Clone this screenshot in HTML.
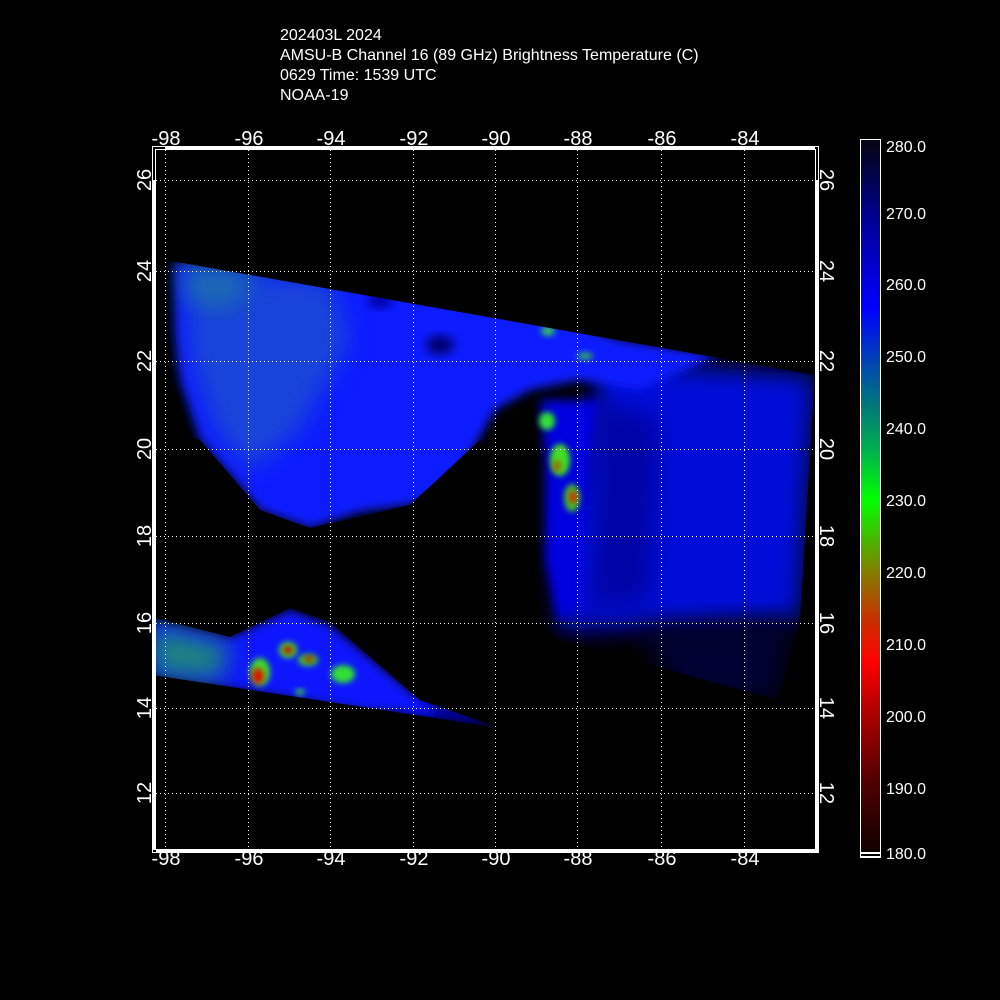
<!DOCTYPE html>
<html><head><meta charset="utf-8"><style>
html,body{margin:0;padding:0;background:#000;width:1000px;height:1000px;overflow:hidden}
svg{display:block}
text{font-family:"Liberation Sans",sans-serif;fill:#fff}
</style></head><body>
<svg width="1000" height="1000" viewBox="0 0 1000 1000" xmlns="http://www.w3.org/2000/svg">
<defs>
<linearGradient id="cb" x1="0" y1="146" x2="0" y2="853" gradientUnits="userSpaceOnUse">
<stop offset="0" stop-color="#05051a"/><stop offset="0.1" stop-color="#000090"/>
<stop offset="0.23" stop-color="#0000ff"/><stop offset="0.3" stop-color="#0040b8"/>
<stop offset="0.37" stop-color="#007a78"/><stop offset="0.43" stop-color="#00b050"/>
<stop offset="0.5" stop-color="#00ff00"/><stop offset="0.6" stop-color="#808000"/>
<stop offset="0.67" stop-color="#c83000"/><stop offset="0.73" stop-color="#ff0000"/>
<stop offset="0.8" stop-color="#b00000"/><stop offset="0.9" stop-color="#500000"/>
<stop offset="1" stop-color="#100000"/></linearGradient>
<filter id="b6" x="-20%" y="-20%" width="140%" height="140%"><feGaussianBlur stdDeviation="5"/></filter>
<filter id="b3" x="-50%" y="-50%" width="200%" height="200%"><feGaussianBlur stdDeviation="3"/></filter>
<filter id="b10" x="-20%" y="-20%" width="140%" height="140%"><feGaussianBlur stdDeviation="12"/></filter>
<clipPath id="sw1"><polygon points="177,262 815,375 800,620 778,700 560,640 540,625 520,540 480,440 410,505 310,528 260,510 200,440 160,430 160,262"/></clipPath>
<clipPath id="sw2"><polygon points="152,617 230,637 290,608 330,622 420,700 500,728 152,675"/></clipPath>
</defs>
<g clip-path="url(#sw1)">
<rect x="150" y="250" width="670" height="470" fill="#000"/>
<polygon points="600,360 815,375 800,620 560,630 560,560 590,440" fill="#0010d8" filter="url(#b10)"/>
<polygon points="600,400 660,420 650,600 590,610" fill="#000090" opacity="0.7" filter="url(#b10)"/>
<polygon points="640,630 790,620 778,700 680,700" fill="#000030" filter="url(#b10)"/>
<polygon points="175,262 500,300 620,340 720,355 640,390 580,380 530,390 495,410 478,440 460,470 440,490 410,505 360,512 310,528 260,510 235,480 200,440 180,380 175,330" fill="#0a1cff" filter="url(#b6)"/>
<polygon points="185,270 330,280 350,340 300,430 250,470 215,430 190,360" fill="#1a50d0" opacity="0.8" filter="url(#b10)"/>
<polygon points="180,262 260,268 230,310 185,300" fill="#1a7aa0" opacity="0.7" filter="url(#b10)"/>
<ellipse cx="440" cy="345" rx="14" ry="10" fill="#000070" filter="url(#b6)"/>
<ellipse cx="380" cy="300" rx="12" ry="8" fill="#0000a0" filter="url(#b6)"/>
<ellipse cx="160" cy="480" rx="20" ry="30" fill="#000090" filter="url(#b10)"/>
<ellipse cx="510" cy="555" rx="8" ry="10" fill="#0000a0" filter="url(#b3)"/>
<polygon points="540,400 600,400 590,470 580,600 560,625 545,560 545,460" fill="#0000e0" filter="url(#b6)"/>
<ellipse cx="547" cy="421" rx="8" ry="9" fill="#30e030" filter="url(#b3)"/>
<ellipse cx="560" cy="460" rx="10" ry="16" fill="#40e020" filter="url(#b3)"/>
<ellipse cx="557" cy="466" rx="4" ry="6" fill="#a06000" filter="url(#b3)"/>
<ellipse cx="572" cy="498" rx="8" ry="14" fill="#40c020" filter="url(#b3)"/>
<ellipse cx="573" cy="497" rx="4" ry="6" fill="#e02000" filter="url(#b3)"/>
<ellipse cx="548" cy="331" rx="7" ry="5" fill="#30c060" filter="url(#b3)"/>
<ellipse cx="585" cy="356" rx="8" ry="4" fill="#30a070" filter="url(#b3)"/>
</g>
<g clip-path="url(#sw2)">
<rect x="150" y="600" width="360" height="130" fill="#000"/>
<polygon points="420,690 500,728 400,715" fill="#0000a0" filter="url(#b6)"/>
<polygon points="152,620 230,637 290,610 330,625 420,700 440,715 360,710 152,675" fill="#0a18ff" filter="url(#b6)"/>
<polygon points="152,625 230,645 220,680 152,675" fill="#20a060" opacity="0.8" filter="url(#b10)"/>
<ellipse cx="260" cy="672" rx="10" ry="14" fill="#40e020" filter="url(#b3)"/>
<ellipse cx="258" cy="676" rx="6" ry="8" fill="#e01000" filter="url(#b3)"/>
<ellipse cx="288" cy="650" rx="9" ry="8" fill="#40e020" filter="url(#b3)"/>
<ellipse cx="288" cy="650" rx="5" ry="4" fill="#d00000" filter="url(#b3)"/>
<ellipse cx="308" cy="660" rx="10" ry="6" fill="#40d020" filter="url(#b3)"/>
<ellipse cx="309" cy="659" rx="5" ry="3" fill="#c01000" filter="url(#b3)"/>
<ellipse cx="343" cy="674" rx="12" ry="9" fill="#30e030" filter="url(#b3)"/>
<ellipse cx="300" cy="692" rx="5" ry="3" fill="#30d040" filter="url(#b3)"/>
</g>
<g stroke="#fff" stroke-width="1" stroke-dasharray="1,3">
<line x1="165.5" y1="150" x2="165.5" y2="850"/><line x1="248.5" y1="150" x2="248.5" y2="850"/>
<line x1="330.5" y1="150" x2="330.5" y2="850"/><line x1="413.5" y1="150" x2="413.5" y2="850"/>
<line x1="495.5" y1="150" x2="495.5" y2="850"/><line x1="577.5" y1="150" x2="577.5" y2="850"/>
<line x1="661.5" y1="150" x2="661.5" y2="850"/><line x1="744.5" y1="150" x2="744.5" y2="850"/>
<line x1="156" y1="180.5" x2="815" y2="180.5"/><line x1="156" y1="271.5" x2="815" y2="271.5"/>
<line x1="156" y1="361.5" x2="815" y2="361.5"/><line x1="156" y1="449.5" x2="815" y2="449.5"/>
<line x1="156" y1="536.5" x2="815" y2="536.5"/><line x1="156" y1="623.5" x2="815" y2="623.5"/>
<line x1="156" y1="708.5" x2="815" y2="708.5"/><line x1="156" y1="793.5" x2="815" y2="793.5"/>
</g>
<g fill="none" stroke="#fff" stroke-width="1">
<rect x="152.5" y="146.5" width="666" height="706"/>
<rect x="155.5" y="149.5" width="660" height="700"/>
</g>
<g fill="#fff">
<rect x="165" y="147" width="650" height="3"/>
<rect x="152" y="180" width="4" height="670"/>
<rect x="815" y="180" width="4" height="670"/>
<rect x="156" y="849" width="662" height="4"/>
</g>
<g font-size="20" text-anchor="middle">
<text x="166" y="145">-98</text><text x="249" y="145">-96</text><text x="331" y="145">-94</text>
<text x="414" y="145">-92</text><text x="496" y="145">-90</text><text x="578" y="145">-88</text>
<text x="662" y="145">-86</text><text x="745" y="145">-84</text>
<text x="166" y="865">-98</text><text x="249" y="865">-96</text><text x="331" y="865">-94</text>
<text x="414" y="865">-92</text><text x="496" y="865">-90</text><text x="578" y="865">-88</text>
<text x="662" y="865">-86</text><text x="745" y="865">-84</text>
<text transform="translate(151,180) rotate(-90)">26</text>
<text transform="translate(151,271) rotate(-90)">24</text>
<text transform="translate(151,361) rotate(-90)">22</text>
<text transform="translate(151,449) rotate(-90)">20</text>
<text transform="translate(151,536) rotate(-90)">18</text>
<text transform="translate(151,623) rotate(-90)">16</text>
<text transform="translate(151,708) rotate(-90)">14</text>
<text transform="translate(151,793) rotate(-90)">12</text>
<text transform="translate(820,180) rotate(90)">26</text>
<text transform="translate(820,271) rotate(90)">24</text>
<text transform="translate(820,361) rotate(90)">22</text>
<text transform="translate(820,449) rotate(90)">20</text>
<text transform="translate(820,536) rotate(90)">18</text>
<text transform="translate(820,623) rotate(90)">16</text>
<text transform="translate(820,708) rotate(90)">14</text>
<text transform="translate(820,793) rotate(90)">12</text>
</g>
<g font-size="16">
<text x="280" y="40">202403L 2024</text>
<text x="280" y="60">AMSU-B Channel 16 (89 GHz) Brightness Temperature (C)</text>
<text x="280" y="80">0629 Time: 1539 UTC</text>
<text x="280" y="100">NOAA-19</text>
</g>
<rect x="861" y="140" width="19" height="712" fill="url(#cb)"/>
<rect x="860.5" y="139.5" width="20" height="718" fill="none" stroke="#fff"/>
<rect x="861" y="852" width="19" height="2" fill="#fff"/>
<rect x="861" y="856" width="19" height="2" fill="#fff"/>
<g font-size="16">
<text x="886" y="152">280.0</text><text x="886" y="219">270.0</text><text x="886" y="290">260.0</text>
<text x="886" y="362">250.0</text><text x="886" y="434">240.0</text><text x="886" y="506">230.0</text>
<text x="886" y="578">220.0</text><text x="886" y="650">210.0</text><text x="886" y="722">200.0</text>
<text x="886" y="794">190.0</text><text x="886" y="859">180.0</text>
</g>
</svg>
</body></html>
